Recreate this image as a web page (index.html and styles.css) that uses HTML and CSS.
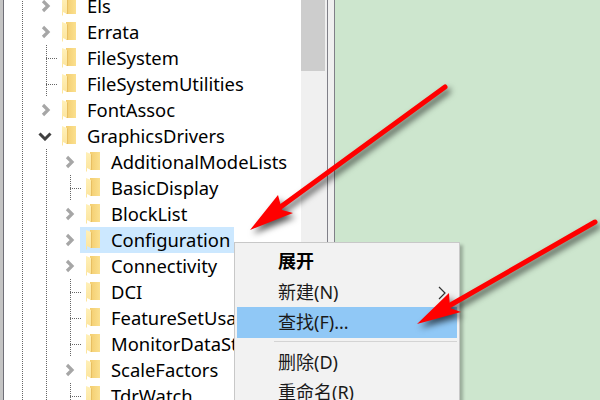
FILE: index.html
```html
<!DOCTYPE html>
<html lang="zh">
<head>
<meta charset="utf-8">
<title>Registry Editor</title>
<link rel="stylesheet" href="styles.css">
</head>
<body>
<svg class="defs" width="0" height="0" aria-hidden="true">
  <defs>
    <linearGradient id="fb" x1="0" y1="0" x2="1" y2="0"><stop offset="0" stop-color="#f3cd6f"/><stop offset="1" stop-color="#fbe08f"/></linearGradient>
    <linearGradient id="ff" x1="0" y1="0" x2="0" y2="1"><stop offset="0" stop-color="#fff0b8"/><stop offset="1" stop-color="#fce49c"/></linearGradient>
    <symbol id="folder" viewBox="0 0 14 20">
      <path d="M4 0H14V18H4Z" fill="url(#fb)"/>
      <path d="M0 0L5 2V18L1 16V20L0 19Z" fill="url(#ff)"/>
      <path d="M5 2L6 3V18H5Z" fill="#e8bf62"/>
    </symbol>
    <symbol id="chev" viewBox="0 0 10 14"><path d="M2 2L7 7L2 12" fill="none" stroke="currentColor" stroke-width="3.2"/></symbol>
  </defs>
</svg>
<div class="window">
  <div class="tree">
    <div class="row l1"><svg class="chev"><use href="#chev"/></svg><svg class="folder"><use href="#folder"/></svg><span class="name">Els</span></div>
    <div class="row l1"><svg class="chev"><use href="#chev"/></svg><svg class="folder"><use href="#folder"/></svg><span class="name">Errata</span></div>
    <div class="row l1 leaf"><svg class="folder"><use href="#folder"/></svg><span class="name">FileSystem</span></div>
    <div class="row l1 leaf"><svg class="folder"><use href="#folder"/></svg><span class="name">FileSystemUtilities</span></div>
    <div class="row l1"><svg class="chev"><use href="#chev"/></svg><svg class="folder"><use href="#folder"/></svg><span class="name">FontAssoc</span></div>
    <div class="row l1 open"><svg class="chev-down" viewBox="0 0 14 9"><path d="M1.5 1.5L7 7L12.5 1.5" fill="none" stroke="currentColor" stroke-width="3"/></svg><svg class="folder"><use href="#folder"/></svg><span class="name">GraphicsDrivers</span></div>
    <div class="row l2"><svg class="chev"><use href="#chev"/></svg><svg class="folder"><use href="#folder"/></svg><span class="name">AdditionalModeLists</span></div>
    <div class="row l2 leaf"><svg class="folder"><use href="#folder"/></svg><span class="name">BasicDisplay</span></div>
    <div class="row l2"><svg class="chev"><use href="#chev"/></svg><svg class="folder"><use href="#folder"/></svg><span class="name">BlockList</span></div>
    <div class="row l2 selected"><svg class="chev"><use href="#chev"/></svg><svg class="folder"><use href="#folder"/></svg><span class="name">Configuration</span></div>
    <div class="row l2"><svg class="chev"><use href="#chev"/></svg><svg class="folder"><use href="#folder"/></svg><span class="name">Connectivity</span></div>
    <div class="row l2 leaf"><svg class="folder"><use href="#folder"/></svg><span class="name">DCI</span></div>
    <div class="row l2 leaf"><svg class="folder"><use href="#folder"/></svg><span class="name">FeatureSetUsage</span></div>
    <div class="row l2 leaf"><svg class="folder"><use href="#folder"/></svg><span class="name">MonitorDataStore</span></div>
    <div class="row l2"><svg class="chev"><use href="#chev"/></svg><svg class="folder"><use href="#folder"/></svg><span class="name">ScaleFactors</span></div>
    <div class="row l2 leaf"><svg class="folder"><use href="#folder"/></svg><span class="name">TdrWatch</span></div>
  </div>
  <div class="scrollbar"><div class="thumb"></div></div>
  <div class="splitter"></div>
  <div class="values"></div>
</div>
<div class="menu">
  <div class="item bold">展开</div>
  <div class="item submenu">新建(N)<svg class="sub" viewBox="0 0 8 14"><path d="M1 1L7 7L1 13" fill="none" stroke="#333" stroke-width="1.2"/></svg></div>
  <div class="item hot">查找(F)...</div>
  <div class="sep"></div>
  <div class="item">删除(D)</div>
  <div class="item">重命名(R)</div>
</div>
<svg class="arrows" viewBox="0 0 600 400" aria-hidden="true">
  <g class="arrow">
    <path d="M445 87L275 211" stroke="#f00" stroke-width="5" stroke-linecap="round" fill="none"/>
    <path d="M250 230L278 195L282 210L293 213Z" fill="#f00"/>
    <path d="M595 222L440 311" stroke="#f00" stroke-width="5" stroke-linecap="round" fill="none"/>
    <path d="M417 324L449 293L450 308L461 312Z" fill="#f00"/>
  </g>
</svg>
</body>
</html>
```
FILE: styles.css
```css
html, body { margin: 0; padding: 0; }
body {
  position: relative;
  width: 600px;
  height: 400px;
  overflow: hidden;
  background: #fff;
  font-family: "Noto Sans", "Noto Sans CJK SC", sans-serif;
  color: #000;
}
.defs { position: absolute; }
.window { display: flex; height: 400px; }
.tree {
  width: 297px;
  height: 400px;
  overflow: hidden;
  background: #fff;
  border-left: 1px solid #6f6f78;
  margin-left: 3px;
  flex: none;
}
.window::before {
  content: "";
  width: 3px;
  margin-right: -3px;
  background: #c4c4c4;
  flex: none;
}
.row {
  --dot: repeating-linear-gradient(to bottom, #666 0 1px, transparent 1px 2px);
  height: 26px;
  position: relative;
  display: flex;
  align-items: center;
  font-size: 18.4px;
  white-space: nowrap;
  background-repeat: no-repeat;
  background-size: 1px 100%;
  background-image: var(--dot);
  background-position: 18px 0;
}
.row:first-child { margin-top: -7px; }
.l1 { padding-left: 58px; }
.l2 {
  background-image: var(--dot), var(--dot);
  background-position: 18px 0, 42px 0;
  padding-left: 82px;
}
.l1.leaf {
  background-image: var(--dot), var(--dot), repeating-linear-gradient(to right, #666 0 1px, transparent 1px 2px);
  background-position: 18px 0, 42px 0, 42px 13px;
  background-size: 1px 100%, 1px 100%, 11px 1px;
}
.l2.leaf {
  background-image: var(--dot), var(--dot), var(--dot), repeating-linear-gradient(to right, #666 0 1px, transparent 1px 2px);
  background-position: 18px 0, 42px 0, 66px 0, 66px 13px;
  background-size: 1px 100%, 1px 100%, 1px 100%, 11px 1px;
}
.folder { width: 14px; height: 20px; flex: none; margin-right: 11px; position: relative; z-index: 1; }
.name { line-height: 26px; position: relative; z-index: 1; }
.chev {
  position: absolute;
  width: 10px;
  height: 14px;
  top: 6px;
  left: 37px;
  color: #a6a6a6;
}
.l2 .chev { left: 61px; }
.chev-down {
  position: absolute;
  width: 14px;
  height: 9px;
  top: 9px;
  left: 34px;
  color: #404040;
}
.selected::after {
  content: "";
  position: absolute;
  z-index: 0;
  left: 76px;
  top: 0;
  bottom: 0;
  width: 154px;
  background: #cce8ff;
}
.selected .chev { z-index: 1; }
.scrollbar { width: 26px; height: 400px; background: #f0f0f0; flex: none; }
.thumb { width: 24px; height: 71px; background: #cdcdcd; }
.splitter {
  width: 6px;
  height: 400px;
  background: #f0f0f0;
  border-left: 1px solid #808088;
  border-right: 1px solid #808088;
  flex: none;
}
.values { flex: 1; background: #cde6ce; }
.menu {
  position: absolute;
  z-index: 2;
  left: 234px;
  top: 242px;
  width: 220px;
  height: 170px;
  padding: 3px 2px;
  background: #f2f2f2;
  border: 1px solid #c8c8c8;
  box-shadow: 3px 3px 3px rgba(0, 0, 0, 0.25);
  font-size: 18px;
  color: #1a1a1a;
}
.item {
  position: relative;
  height: 30.5px;
  line-height: 30.5px;
  padding-left: 41px;
}
.bold { font-weight: 700; color: #000; }
.hot { background: #90c8f6; }
.sep { height: 1px; margin: 3px 0 5px 37px; background: #d4d4d4; }
.sub { position: absolute; right: 11px; top: 9px; width: 8px; height: 14px; }
.arrows {
  position: absolute;
  z-index: 3;
  left: 0;
  top: 0;
  width: 600px;
  height: 400px;
  pointer-events: none;
}
.arrow { filter: drop-shadow(3px 4px 3px rgba(0, 0, 0, 0.65)); }
```
